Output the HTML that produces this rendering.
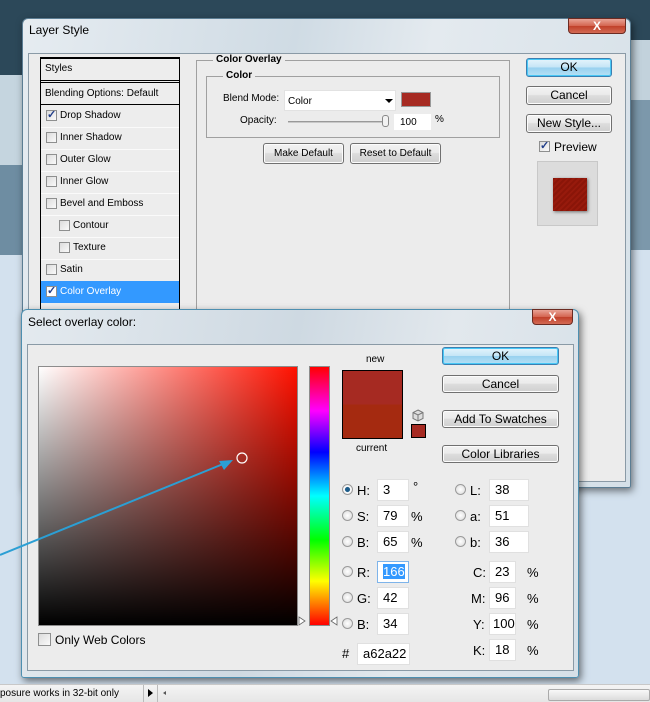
<!DOCTYPE html>
<html><head><style>
*{margin:0;padding:0;box-sizing:border-box}
body{width:650px;height:702px;overflow:hidden;position:relative;font-family:"Liberation Sans",sans-serif;font-size:11px;color:#000;background:#d3e1ee}
.a{position:absolute}
.t{position:absolute;white-space:nowrap;line-height:12px}
.btn{position:absolute;border:1px solid #707070;border-radius:3px;background:linear-gradient(#f2f2f2 0%,#ebebeb 45%,#dddddd 50%,#cfcfcf 100%);text-align:center;font-size:12px;box-shadow:inset 0 0 0 1px #fcfcfc}
.ok{border-color:#3c7fb1;background:linear-gradient(#e5f4fc 0%,#c4e5f6 50%,#98d1ef 51%,#b6e0f5 100%);box-shadow:inset 0 0 0 1px #48c8f6}
.cb{position:absolute;width:11px;height:11px;border:1px solid #8e8f8f;background:linear-gradient(135deg,#dcdcdc,#fafafa)}
.cb.c::after{content:"✓";position:absolute;left:0;top:-3px;font-size:11px;color:#213e8a;font-weight:bold}
.rd{position:absolute;width:11px;height:11px;border-radius:50%;border:1px solid #9a9a9a;background:radial-gradient(#fff,#d8d8d8)}
.in{position:absolute;background:#fff;border:1px solid #e0e0e0;font-size:13px;padding-left:5px;line-height:19px;height:22px}
.l{position:absolute;font-size:13px;white-space:nowrap;line-height:14px}
.x{position:absolute;border:1px solid #6b2b22;border-radius:0 0 4px 4px;background:linear-gradient(#e8a395,#d3644f 50%,#c0402a 51%,#d36a54);color:#fff;font-weight:bold;text-align:center;font-size:12px;line-height:14px}
</style></head><body>
<div class="a" style="left:0;top:0;width:650px;height:75px;background:#2c4859"></div>
<div class="a" style="left:0;top:75px;width:30px;height:90px;background:#c5d5df"></div>
<div class="a" style="left:0;top:165px;width:30px;height:90px;background:#6e8da2"></div>
<div class="a" style="left:630px;top:40px;width:20px;height:60px;background:#c2d2dc"></div>
<div class="a" style="left:630px;top:100px;width:20px;height:150px;background:#7c98ab"></div>

<div class="a" style="left:22px;top:18px;width:609px;height:470px;border:1px solid #5b7d93;border-radius:6px 6px 2px 2px;background:linear-gradient(100deg,#e6ecf1,#cfdbe4 40%,#e4eaef 60%,#d5e0e8);box-shadow:2px 3px 8px rgba(0,0,0,.5)"></div>
<div class="t" style="left:29px;top:24px;font-size:12px">Layer Style</div>
<div class="x" style="left:568px;top:18px;width:58px;height:16px">X</div>
<div class="a" style="left:28px;top:53px;width:598px;height:429px;background:#ececec;border:1px solid #8a9aa6"></div>
<div class="a" style="left:40px;top:57px;width:140px;height:260px;border:1px solid #000;border-top-width:2px;background:#ededed"></div>
<div class="t" style="left:45px;top:63px;font-size:10px">Styles</div>
<div class="a" style="left:41px;top:80px;width:138px;height:3px;border-top:1px solid #000;border-bottom:1px solid #000"></div>
<div class="t" style="left:45px;top:88px;font-size:10px">Blending Options: Default</div>
<div class="a" style="left:41px;top:104px;width:138px;height:1px;background:#000"></div>
<div class="cb c" style="left:46px;top:110px"></div><div class="t" style="left:60px;top:110px;font-size:10px">Drop Shadow</div>
<div class="a" style="left:41px;top:127px;width:138px;height:1px;background:#fafafa"></div>
<div class="cb" style="left:46px;top:132px"></div><div class="t" style="left:60px;top:132px;font-size:10px">Inner Shadow</div>
<div class="a" style="left:41px;top:149px;width:138px;height:1px;background:#fafafa"></div>
<div class="cb" style="left:46px;top:154px"></div><div class="t" style="left:60px;top:154px;font-size:10px">Outer Glow</div>
<div class="a" style="left:41px;top:171px;width:138px;height:1px;background:#fafafa"></div>
<div class="cb" style="left:46px;top:176px"></div><div class="t" style="left:60px;top:176px;font-size:10px">Inner Glow</div>
<div class="a" style="left:41px;top:193px;width:138px;height:1px;background:#fafafa"></div>
<div class="cb" style="left:46px;top:198px"></div><div class="t" style="left:60px;top:198px;font-size:10px">Bevel and Emboss</div>
<div class="a" style="left:41px;top:215px;width:138px;height:1px;background:#fafafa"></div>
<div class="cb" style="left:59px;top:220px"></div><div class="t" style="left:73px;top:220px;font-size:10px">Contour</div>
<div class="a" style="left:41px;top:237px;width:138px;height:1px;background:#fafafa"></div>
<div class="cb" style="left:59px;top:242px"></div><div class="t" style="left:73px;top:242px;font-size:10px">Texture</div>
<div class="a" style="left:41px;top:259px;width:138px;height:1px;background:#fafafa"></div>
<div class="cb" style="left:46px;top:264px"></div><div class="t" style="left:60px;top:264px;font-size:10px">Satin</div>
<div class="a" style="left:41px;top:281px;width:138px;height:22px;background:#3399ff"></div>
<div class="cb c" style="left:46px;top:286px;background:#fff"></div><div class="t" style="left:60px;top:286px;font-size:10px;color:#fff">Color Overlay</div>

<div class="a" style="left:196px;top:60px;width:314px;height:255px;border:1px solid #a0a0a0;border-bottom:none"></div>
<div class="t" style="left:213px;top:54px;font-size:10px;font-weight:bold;background:#ececec;padding:0 3px">Color Overlay</div>
<div class="a" style="left:206px;top:76px;width:294px;height:62px;border:1px solid #a0a0a0;background:#ececec"></div>
<div class="t" style="left:223px;top:70px;font-size:10px;font-weight:bold;background:#ececec;padding:0 3px">Color</div>
<div class="t" style="left:223px;top:93px;font-size:10px">Blend Mode:</div>
<div class="a" style="left:284px;top:90px;width:112px;height:21px;background:#fff;border:1px solid #e2e2e2"></div>
<div class="t" style="left:288px;top:96px;font-size:10px">Color</div>
<div class="a" style="left:385px;top:99px;width:0;height:0;border-left:4px solid transparent;border-right:4px solid transparent;border-top:4px solid #000"></div>
<div class="a" style="left:401px;top:92px;width:30px;height:15px;background:#a62a22;border:1px solid #999"></div>
<div class="t" style="left:240px;top:115px;font-size:10px">Opacity:</div>
<div class="a" style="left:288px;top:121px;width:100px;height:2px;background:#c8c8c8;border-top:1px solid #999"></div>
<div class="a" style="left:382px;top:115px;width:7px;height:12px;border:1px solid #888;border-radius:3px;background:#f2f2f2"></div>
<div class="a" style="left:394px;top:114px;width:37px;height:16px;background:#fff"></div>
<div class="t" style="left:400px;top:117px;font-size:10px">100</div>
<div class="t" style="left:435px;top:114px;font-size:10px">%</div>
<div class="btn" style="left:263px;top:143px;width:81px;height:21px;font-size:10px;line-height:19px">Make Default</div>
<div class="btn" style="left:350px;top:143px;width:91px;height:21px;font-size:10px;line-height:19px">Reset to Default</div>
<div class="btn ok" style="left:526px;top:58px;width:86px;height:19px;line-height:17px">OK</div>
<div class="btn" style="left:526px;top:86px;width:86px;height:19px;line-height:17px">Cancel</div>
<div class="btn" style="left:526px;top:114px;width:86px;height:19px;line-height:17px">New Style...</div>
<div class="cb c" style="left:539px;top:141px"></div><div class="t" style="left:554px;top:141px;font-size:12px">Preview</div>
<div class="a" style="left:537px;top:161px;width:61px;height:65px;background:#dcdcdc;border:1px solid #c8c8c8"></div>
<div class="a" style="left:553px;top:178px;width:34px;height:33px;background:repeating-linear-gradient(135deg,#8a1508 0 2px,#971a0c 2px 4px);box-shadow:1px 1px 3px rgba(0,0,0,.5)"></div>

<div class="a" style="left:21px;top:309px;width:558px;height:369px;border:1px solid #4d8fb0;border-radius:6px 6px 3px 3px;background:linear-gradient(100deg,#e4eaef,#ced9e2 45%,#e2e8ed 70%,#d6e0e8);box-shadow:2px 3px 8px rgba(0,0,0,.55)"></div>
<div class="t" style="left:28px;top:316px;font-size:12px">Select overlay color:</div>
<div class="x" style="left:532px;top:309px;width:41px;height:16px">X</div>
<div class="a" style="left:27px;top:344px;width:547px;height:327px;background:#ececec;border:1px solid #8a9aa6"></div>
<div class="a" style="left:38px;top:366px;width:260px;height:260px;border:1px solid #8c8c8c;background:linear-gradient(to bottom,rgba(0,0,0,0),#000),linear-gradient(to right,#fff,#ff1100)"></div>
<div class="a" style="left:309px;top:366px;width:21px;height:260px;border:1px solid #8c8c8c;background:linear-gradient(to bottom,#ff0000,#ff00ff 17%,#0000ff 33%,#00ffff 50%,#00ff00 67%,#ffff00 83%,#ff0000)"></div>
<svg class="a" style="left:0;top:440px" width="340" height="200">
<line x1="0" y1="115" x2="228" y2="22" stroke="#2b9fd4" stroke-width="2"/>
<polygon points="233,20 219,21 224,30" fill="#2b9fd4"/>
<circle cx="242" cy="18" r="5" fill="none" stroke="#fff" stroke-width="1.2"/>
<polygon points="299,177 305,181 299,185" fill="#fff" stroke="#666" stroke-width="0.8"/>
<polygon points="337,177 331,181 337,185" fill="#fff" stroke="#666" stroke-width="0.8"/>
</svg>
<div class="cb" style="left:38px;top:633px;width:13px;height:13px"></div>
<div class="l" style="left:55px;top:633px;font-size:12px">Only Web Colors</div>
<div class="t" style="left:366px;top:354px;font-size:10px">new</div>
<div class="a" style="left:342px;top:370px;width:61px;height:69px;border:1px solid #000;background:linear-gradient(#a62a22 50%,#a52a10 50%)"></div>
<div class="t" style="left:356px;top:443px;font-size:10px">current</div>
<svg class="a" style="left:412px;top:409px" width="12" height="13"><polygon points="6,1 11,3.5 11,9.5 6,12 1,9.5 1,3.5" fill="#ddd" stroke="#777"/><polyline points="1,3.5 6,6 11,3.5" fill="none" stroke="#777"/><line x1="6" y1="6" x2="6" y2="12" stroke="#777"/></svg>
<div class="a" style="left:411px;top:424px;width:15px;height:14px;border:1px solid #000;background:#a62a22"></div>
<div class="btn ok" style="left:442px;top:347px;width:117px;height:18px;line-height:16px">OK</div>
<div class="btn" style="left:442px;top:375px;width:117px;height:18px;line-height:16px">Cancel</div>
<div class="btn" style="left:442px;top:410px;width:117px;height:18px;line-height:16px">Add To Swatches</div>
<div class="btn" style="left:442px;top:445px;width:117px;height:18px;line-height:16px">Color Libraries</div>
<div class="rd" style="left:342px;top:484px;background:radial-gradient(#1d5c8a 35%,#fff 45%,#ddd)"></div><div class="l" style="left:357px;top:484px">H:</div><div class="in" style="left:377px;top:479px;width:32px">3</div><div class="l" style="left:413px;top:480px">°</div>
<div class="rd" style="left:342px;top:510px"></div><div class="l" style="left:357px;top:510px">S:</div><div class="in" style="left:377px;top:505px;width:32px">79</div><div class="l" style="left:411px;top:510px">%</div>
<div class="rd" style="left:342px;top:536px"></div><div class="l" style="left:357px;top:536px">B:</div><div class="in" style="left:377px;top:531px;width:32px">65</div><div class="l" style="left:411px;top:536px">%</div>
<div class="rd" style="left:342px;top:566px"></div><div class="l" style="left:357px;top:566px">R:</div><div class="in" style="left:377px;top:561px;width:32px;border-color:#7eb4ea"><span style="background:#3399ff;color:#fff">166</span></div>
<div class="rd" style="left:342px;top:592px"></div><div class="l" style="left:357px;top:592px">G:</div><div class="in" style="left:377px;top:587px;width:32px">42</div>
<div class="rd" style="left:342px;top:618px"></div><div class="l" style="left:357px;top:618px">B:</div><div class="in" style="left:377px;top:613px;width:32px">34</div>
<div class="l" style="left:342px;top:647px">#</div><div class="in" style="left:357px;top:643px;width:53px">a62a22</div>
<div class="rd" style="left:455px;top:484px"></div><div class="l" style="left:470px;top:484px">L:</div><div class="in" style="left:489px;top:479px;width:40px">38</div>
<div class="rd" style="left:455px;top:510px"></div><div class="l" style="left:470px;top:510px">a:</div><div class="in" style="left:489px;top:505px;width:40px">51</div>
<div class="rd" style="left:455px;top:536px"></div><div class="l" style="left:470px;top:536px">b:</div><div class="in" style="left:489px;top:531px;width:40px">36</div>
<div class="l" style="left:473px;top:566px">C:</div><div class="in" style="left:489px;top:561px;width:27px">23</div><div class="l" style="left:527px;top:566px">%</div>
<div class="l" style="left:471px;top:592px">M:</div><div class="in" style="left:489px;top:587px;width:27px">96</div><div class="l" style="left:527px;top:592px">%</div>
<div class="l" style="left:473px;top:618px">Y:</div><div class="in" style="left:489px;top:613px;width:27px;padding-left:3px">100</div><div class="l" style="left:527px;top:618px">%</div>
<div class="l" style="left:473px;top:644px">K:</div><div class="in" style="left:489px;top:639px;width:27px">18</div><div class="l" style="left:527px;top:644px">%</div>

<div class="a" style="left:0;top:684px;width:650px;height:18px;background:linear-gradient(#f4f4f4,#e6e6e6);border-top:1px solid #c8c8c8"></div>
<div class="t" style="left:0;top:688px;font-size:10px">posure works in 32-bit only</div>
<div class="a" style="left:143px;top:685px;width:1px;height:17px;background:#bbb"></div>
<div class="a" style="left:148px;top:689px;width:0;height:0;border-top:4px solid transparent;border-bottom:4px solid transparent;border-left:5px solid #000"></div>
<div class="a" style="left:157px;top:685px;width:1px;height:17px;background:#bbb"></div>
<div class="a" style="left:163px;top:691px;width:0;height:0;border-top:2px solid transparent;border-bottom:2px solid transparent;border-right:3px solid #555"></div>
<div class="a" style="left:548px;top:689px;width:102px;height:12px;border:1px solid #aaa;border-radius:2px;background:linear-gradient(#f8f8f8,#dcdcdc)"></div>
</body></html>
